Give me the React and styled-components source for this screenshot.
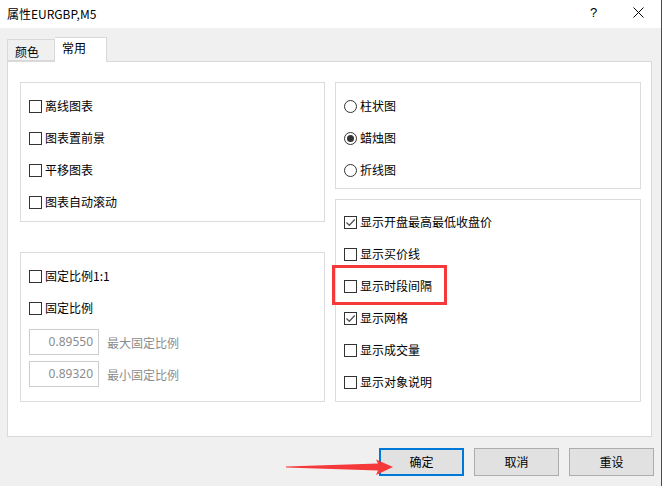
import React from "react";
import styled, { createGlobalStyle } from "styled-components";

const Global = createGlobalStyle`
  html, body { margin: 0; padding: 0; background: #f0f0f0; }
  body { font-family: "Noto Sans CJK SC", "Noto Sans", sans-serif; font-size: 12px; color: #000; }
  * { box-sizing: border-box; }
`;

const Window = styled.div`
  position: relative;
  width: 662px;
  height: 486px;
  background: #f0f0f0;
  border-right: 1px solid #4a4a4a;
  overflow: hidden;
`;

const TitleBar = styled.div`
  height: 28px;
  background: #fff;
  display: flex;
  align-items: center;
  padding-left: 7px;
`;

const Title = styled.div`
  flex: 1;
  font-size: 12px;
  line-height: 14px;
`;

const TitleButton = styled.div`
  width: 45px;
  height: 28px;
  display: flex;
  align-items: center;
  justify-content: center;
  font-family: "Liberation Sans", sans-serif;
  font-size: 13px;
  margin-top: -3px;
`;

const TabBar = styled.div`
  display: flex;
  align-items: flex-end;
  padding-left: 7px;
  margin-top: 9px;
  height: 24px;
  position: relative;
  z-index: 2;
`;

const Tab = styled.div`
  width: ${(p) => p.$w}px;
  height: ${(p) => (p.$active ? 25 : 22)}px;
  margin-bottom: ${(p) => (p.$active ? -1 : 0)}px;
  background: ${(p) => (p.$active ? "#fff" : "#f0f0f0")};
  border: 1px solid #d9d9d9;
  border-bottom: ${(p) => (p.$active ? "none" : "1px solid #d9d9d9")};
  border-left: ${(p) => (p.$active ? "none" : "1px solid #d9d9d9")};
  padding-left: 7px;
  padding-top: ${(p) => (p.$active ? 2 : 4)}px;
  line-height: 16px;
`;

const Panel = styled.div`
  margin-left: 7px;
  width: 645px;
  height: 376px;
  background: #fff;
  border: 1px solid #d9d9d9;
  padding: 20px 10px 0 12px;
  display: grid;
  grid-template-columns: 305px 306px;
  column-gap: 10px;
  align-items: start;
`;

const Column = styled.div`
  display: flex;
  flex-direction: column;
  gap: ${(p) => p.$gap}px;
`;

const Group = styled.div`
  position: relative;
  height: ${(p) => p.$h}px;
  border: 1px solid #dcdcdc;
  padding: ${(p) => p.$pt}px 8px 0 8px;
  display: flex;
  flex-direction: column;
`;

const Row = styled.label`
  height: 32px;
  display: flex;
  align-items: center;
  gap: 3px;
  color: ${(p) => (p.$disabled ? "#8c8c8c" : "#000")};
`;

const Box = styled.span`
  width: 13px;
  height: 13px;
  border: 1px solid #333;
  background: #fff;
  display: inline-flex;
  align-items: center;
  justify-content: center;
  flex-shrink: 0;
`;

const Radio = styled.span`
  width: 13px;
  height: 13px;
  border: 1px solid #333;
  border-radius: 50%;
  background: #fff;
  display: inline-flex;
  align-items: center;
  justify-content: center;
  flex-shrink: 0;
`;

const Dot = styled.span`
  width: 7px;
  height: 7px;
  border-radius: 50%;
  background: #333;
`;

const Label = styled.span`
  line-height: 14px;
  margin-top: -1px;
`;

const InputRow = styled.div`
  display: flex;
  align-items: center;
  gap: 8px;
  margin-top: ${(p) => p.$mt}px;
  color: #8c8c8c;
`;

const NumberBox = styled.div`
  width: 70px;
  height: 26px;
  border: 1px solid #cccccc;
  text-align: right;
  padding-right: 5px;
  line-height: 23px;
  font-family: "Noto Sans", sans-serif;
  font-size: 12px;
  color: #8c8c8c;
`;

const Highlight = styled.div`
  position: absolute;
  left: -4px;
  top: 65px;
  width: 115px;
  height: 40px;
  border: 3px solid #f5393b;
  pointer-events: none;
`;

const Footer = styled.div`
  display: flex;
  justify-content: flex-end;
  gap: 10px;
  padding-right: 7px;
  margin-top: 11px;
`;

const Button = styled.div`
  width: 85px;
  height: 28px;
  background: #e1e1e1;
  border: ${(p) => (p.$primary ? "2px solid #0078d7" : "1px solid #adadad")};
  display: flex;
  align-items: center;
  justify-content: center;
  line-height: 14px;
`;

const Arrow = styled.svg`
  position: absolute;
  left: 286px;
  top: 458px;
  width: 110px;
  height: 20px;
  overflow: visible;
`;

const Check = () => (
  <svg width="11" height="11" viewBox="0 0 11 11">
    <path d="M1.5 5.5 L4.3 8.3 L9.8 2.5" fill="none" stroke="#555" strokeWidth="1.3" />
  </svg>
);

const CheckRow = ({ checked, children }) => (
  <Row>
    <Box>{checked && <Check />}</Box>
    <Label>{children}</Label>
  </Row>
);

const RadioRow = ({ checked, children }) => (
  <Row>
    <Radio>{checked && <Dot />}</Radio>
    <Label>{children}</Label>
  </Row>
);

export default function App() {
  return (
    <>
      <Global />
      <Window>
        <TitleBar>
          <Title>属性EURGBP,M5</Title>
          <TitleButton>?</TitleButton>
          <TitleButton>
            <svg width="11" height="11" viewBox="0 0 11 11">
              <path d="M0.5 0.5 L10.5 10.5 M10.5 0.5 L0.5 10.5" stroke="#000" strokeWidth="1" />
            </svg>
          </TitleButton>
        </TitleBar>
        <TabBar>
          <Tab $w={48}>颜色</Tab>
          <Tab $w={52} $active>常用</Tab>
        </TabBar>
        <Panel>
          <Column $gap={30}>
            <Group $h={140} $pt={7}>
              <CheckRow>离线图表</CheckRow>
              <CheckRow>图表置前景</CheckRow>
              <CheckRow>平移图表</CheckRow>
              <CheckRow>图表自动滚动</CheckRow>
            </Group>
            <Group $h={150} $pt={7}>
              <CheckRow>固定比例1:1</CheckRow>
              <CheckRow>固定比例</CheckRow>
              <InputRow $mt={5}>
                <NumberBox>0.89550</NumberBox>
                <span>最大固定比例</span>
              </InputRow>
              <InputRow $mt={6}>
                <NumberBox>0.89320</NumberBox>
                <span>最小固定比例</span>
              </InputRow>
            </Group>
          </Column>
          <Column $gap={10}>
            <Group $h={107} $pt={7}>
              <RadioRow>柱状图</RadioRow>
              <RadioRow checked>蜡烛图</RadioRow>
              <RadioRow>折线图</RadioRow>
            </Group>
            <Group $h={203} $pt={6}>
              <CheckRow checked>显示开盘最高最低收盘价</CheckRow>
              <CheckRow>显示买价线</CheckRow>
              <CheckRow>显示时段间隔</CheckRow>
              <CheckRow checked>显示网格</CheckRow>
              <CheckRow>显示成交量</CheckRow>
              <CheckRow>显示对象说明</CheckRow>
              <Highlight />
            </Group>
          </Column>
        </Panel>
        <Footer>
          <Button $primary>确定</Button>
          <Button>取消</Button>
          <Button>重设</Button>
        </Footer>
        <Arrow viewBox="0 0 110 20">
          <polygon
            points="0,8.6 92,5.6 90,1.5 107,9 90,17 92,12.6 0,9.6"
            fill="#f5393b"
          />
        </Arrow>
      </Window>
    </>
  );
}
